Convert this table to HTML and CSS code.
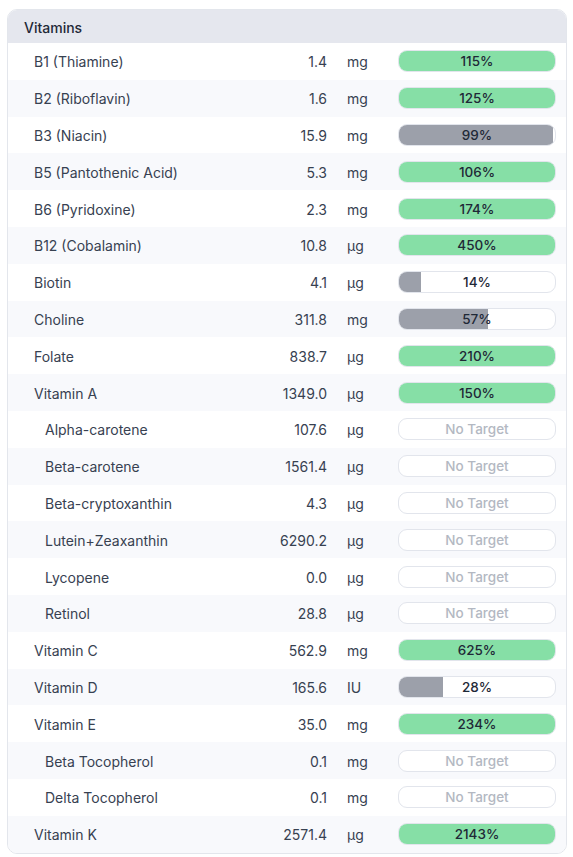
FILE: index.html
```html
<!DOCTYPE html>
<html lang="en">
<head>
    <meta charset="UTF-8">
    <meta name="viewport" content="width=device-width, initial-scale=1.0">
    <title>Vitamins</title>
    <link rel="stylesheet" href="styles.css">
</head>
<body>
    <div class="card">
        <div class="card-header">Vitamins</div>

        <div class="row"><span class="name">B1 (Thiamine)</span><span class="amount">1.4</span><span class="unit">mg</span><div class="bar"><div class="fill good" style="width:100%"></div><span class="pct">115%</span></div></div>
        <div class="row"><span class="name">B2 (Riboflavin)</span><span class="amount">1.6</span><span class="unit">mg</span><div class="bar"><div class="fill good" style="width:100%"></div><span class="pct">125%</span></div></div>
        <div class="row"><span class="name">B3 (Niacin)</span><span class="amount">15.9</span><span class="unit">mg</span><div class="bar"><div class="fill low" style="width:99%"></div><span class="pct">99%</span></div></div>
        <div class="row"><span class="name">B5 (Pantothenic Acid)</span><span class="amount">5.3</span><span class="unit">mg</span><div class="bar"><div class="fill good" style="width:100%"></div><span class="pct">106%</span></div></div>
        <div class="row"><span class="name">B6 (Pyridoxine)</span><span class="amount">2.3</span><span class="unit">mg</span><div class="bar"><div class="fill good" style="width:100%"></div><span class="pct">174%</span></div></div>
        <div class="row"><span class="name">B12 (Cobalamin)</span><span class="amount">10.8</span><span class="unit">µg</span><div class="bar"><div class="fill good" style="width:100%"></div><span class="pct">450%</span></div></div>
        <div class="row"><span class="name">Biotin</span><span class="amount">4.1</span><span class="unit">µg</span><div class="bar"><div class="fill low" style="width:14%"></div><span class="pct">14%</span></div></div>
        <div class="row"><span class="name">Choline</span><span class="amount">311.8</span><span class="unit">mg</span><div class="bar"><div class="fill low" style="width:57%"></div><span class="pct">57%</span></div></div>
        <div class="row"><span class="name">Folate</span><span class="amount">838.7</span><span class="unit">µg</span><div class="bar"><div class="fill good" style="width:100%"></div><span class="pct">210%</span></div></div>
        <div class="row"><span class="name">Vitamin A</span><span class="amount">1349.0</span><span class="unit">µg</span><div class="bar"><div class="fill good" style="width:100%"></div><span class="pct">150%</span></div></div>
        <div class="row sub"><span class="name">Alpha-carotene</span><span class="amount">107.6</span><span class="unit">µg</span><div class="bar"><span class="pct none">No Target</span></div></div>
        <div class="row sub"><span class="name">Beta-carotene</span><span class="amount">1561.4</span><span class="unit">µg</span><div class="bar"><span class="pct none">No Target</span></div></div>
        <div class="row sub"><span class="name">Beta-cryptoxanthin</span><span class="amount">4.3</span><span class="unit">µg</span><div class="bar"><span class="pct none">No Target</span></div></div>
        <div class="row sub"><span class="name">Lutein+Zeaxanthin</span><span class="amount">6290.2</span><span class="unit">µg</span><div class="bar"><span class="pct none">No Target</span></div></div>
        <div class="row sub"><span class="name">Lycopene</span><span class="amount">0.0</span><span class="unit">µg</span><div class="bar"><span class="pct none">No Target</span></div></div>
        <div class="row sub"><span class="name">Retinol</span><span class="amount">28.8</span><span class="unit">µg</span><div class="bar"><span class="pct none">No Target</span></div></div>
        <div class="row"><span class="name">Vitamin C</span><span class="amount">562.9</span><span class="unit">mg</span><div class="bar"><div class="fill good" style="width:100%"></div><span class="pct">625%</span></div></div>
        <div class="row"><span class="name">Vitamin D</span><span class="amount">165.6</span><span class="unit">IU</span><div class="bar"><div class="fill low" style="width:28%"></div><span class="pct">28%</span></div></div>
        <div class="row"><span class="name">Vitamin E</span><span class="amount">35.0</span><span class="unit">mg</span><div class="bar"><div class="fill good" style="width:100%"></div><span class="pct">234%</span></div></div>
        <div class="row sub"><span class="name">Beta Tocopherol</span><span class="amount">0.1</span><span class="unit">mg</span><div class="bar"><span class="pct none">No Target</span></div></div>
        <div class="row sub"><span class="name">Delta Tocopherol</span><span class="amount">0.1</span><span class="unit">mg</span><div class="bar"><span class="pct none">No Target</span></div></div>
        <div class="row"><span class="name">Vitamin K</span><span class="amount">2571.4</span><span class="unit">µg</span><div class="bar"><div class="fill good" style="width:100%"></div><span class="pct">2143%</span></div></div>
    </div>
</body>
</html>
```

FILE: styles.css
```css
body {
    margin: 0;
    padding: 9px 6px 0 7px;
    font-family: Inter, "Noto Sans", sans-serif;
    font-size: 14px;
    color: #374151;
    background-color: #ffffff;
}

.card {
    border: 1px solid #e3e6ec;
    border-radius: 10px;
    overflow: hidden;
}

.card-header {
    box-sizing: border-box;
    height: 33px;
    line-height: 33px;
    padding: 1px 0 0 16px;
    background-color: #e5e7ee;
    color: #1f2937;
    font-weight: 500;
}

.row {
    box-sizing: border-box;
    display: grid;
    grid-template-columns: 1fr auto 71px 158px;
    align-items: center;
    height: 36.8px;
    padding: 1px 10px 0 26px;
    background-color: #ffffff;
}

.row:nth-child(odd) {
    background-color: #f8f9fc;
}

.row.sub {
    padding-left: 37px;
}

.amount {
    text-align: right;
}

.unit {
    padding-left: 20px;
}

.bar {
    position: relative;
    height: 20px;
    margin-top: -1px;
    border: 1px solid #e2e5ec;
    border-radius: 9px;
    background-color: #ffffff;
    overflow: hidden;
}

.fill {
    height: 100%;
}

.fill.good {
    background-color: #86dfa6;
}

.fill.low {
    background-color: #9ca0aa;
}

.pct {
    position: absolute;
    inset: 0;
    text-align: center;
    line-height: 20px;
    font-size: 13.5px;
    font-weight: 500;
    color: #1f2937;
}

.pct.none {
    color: #b3b8c2;
}
```
